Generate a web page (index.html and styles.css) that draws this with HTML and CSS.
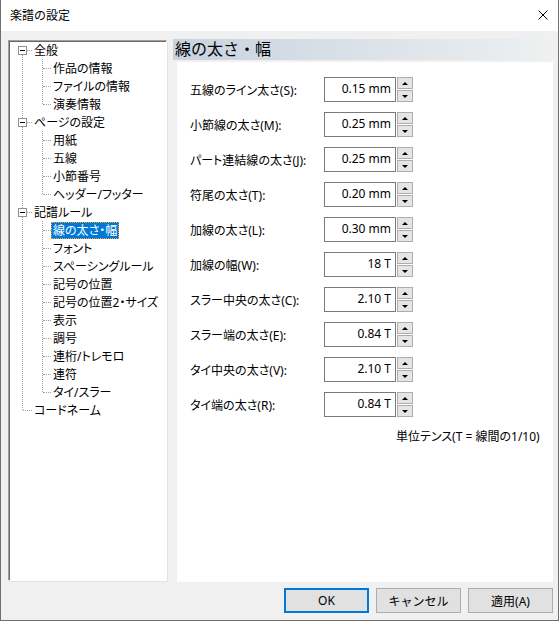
FILE: index.html
```
<!doctype html>
<html lang="ja">
<head>
<meta charset="UTF-8">
<title>楽譜の設定</title>
<link rel="stylesheet" href="styles.css">
</head>
<body>
<div class="window">
	<div class="titlebar">
		<span class="title">楽譜の設定</span>
		<svg class="close" width="10" height="10" viewBox="0 0 10 10"><path d="M0.5 0.5L9.5 9.5M9.5 0.5L0.5 9.5" stroke="#000" stroke-width="1" fill="none"/></svg>
	</div>
	<div class="client">
		<div class="main">
			<div class="treebox">
				<ul class="tree">
					<li class="node">
						<div class="row"><span class="tg"></span><span class="lbl">全般</span></div>
						<ul class="sub">
							<li class="row"><span class="lbl">作品の情報</span></li>
							<li class="row"><span class="lbl">ファイルの情報</span></li>
							<li class="row"><span class="lbl">演奏情報</span></li>
						</ul>
					</li>
					<li class="node">
						<div class="row"><span class="tg"></span><span class="lbl">ページの設定</span></div>
						<ul class="sub">
							<li class="row"><span class="lbl">用紙</span></li>
							<li class="row"><span class="lbl">五線</span></li>
							<li class="row"><span class="lbl">小節番号</span></li>
							<li class="row"><span class="lbl">ヘッダー/フッター</span></li>
						</ul>
					</li>
					<li class="node">
						<div class="row"><span class="tg"></span><span class="lbl">記譜ルール</span></div>
						<ul class="sub">
							<li class="row"><span class="lbl sel">線の太さ・幅</span></li>
							<li class="row"><span class="lbl">フォント</span></li>
							<li class="row"><span class="lbl">スペーシングルール</span></li>
							<li class="row"><span class="lbl">記号の位置</span></li>
							<li class="row"><span class="lbl">記号の位置2・サイズ</span></li>
							<li class="row"><span class="lbl">表示</span></li>
							<li class="row"><span class="lbl">調号</span></li>
							<li class="row"><span class="lbl">連桁/トレモロ</span></li>
							<li class="row"><span class="lbl">連符</span></li>
							<li class="row"><span class="lbl">タイ/スラー</span></li>
						</ul>
					</li>
					<li class="node">
						<div class="row"><span class="lbl">コードネーム</span></div>
					</li>
				</ul>
			</div>
			<div class="page">
				<div class="pagehead">線の太さ・幅</div>
				<div class="pagebody">
					<div class="field"><label>五線のライン太さ(S):</label><div class="spin"><div class="val">0.15 mm</div><div class="arrows"><span class="up"></span><span class="dn"></span></div></div></div>
					<div class="field"><label>小節線の太さ(M):</label><div class="spin"><div class="val">0.25 mm</div><div class="arrows"><span class="up"></span><span class="dn"></span></div></div></div>
					<div class="field"><label>パート連結線の太さ(J):</label><div class="spin"><div class="val">0.25 mm</div><div class="arrows"><span class="up"></span><span class="dn"></span></div></div></div>
					<div class="field"><label>符尾の太さ(T):</label><div class="spin"><div class="val">0.20 mm</div><div class="arrows"><span class="up"></span><span class="dn"></span></div></div></div>
					<div class="field"><label>加線の太さ(L):</label><div class="spin"><div class="val">0.30 mm</div><div class="arrows"><span class="up"></span><span class="dn"></span></div></div></div>
					<div class="field"><label>加線の幅(W):</label><div class="spin"><div class="val">18 T</div><div class="arrows"><span class="up"></span><span class="dn"></span></div></div></div>
					<div class="field"><label>スラー中央の太さ(C):</label><div class="spin"><div class="val">2.10 T</div><div class="arrows"><span class="up"></span><span class="dn"></span></div></div></div>
					<div class="field"><label>スラー端の太さ(E):</label><div class="spin"><div class="val">0.84 T</div><div class="arrows"><span class="up"></span><span class="dn"></span></div></div></div>
					<div class="field"><label>タイ中央の太さ(V):</label><div class="spin"><div class="val">2.10 T</div><div class="arrows"><span class="up"></span><span class="dn"></span></div></div></div>
					<div class="field"><label>タイ端の太さ(R):</label><div class="spin"><div class="val">0.84 T</div><div class="arrows"><span class="up"></span><span class="dn"></span></div></div></div>
					<div class="note">単位テンス(T = 線間の1/10)</div>
				</div>
			</div>
		</div>
		<div class="buttons">
			<button class="btn default">OK</button>
			<button class="btn">キャンセル</button>
			<button class="btn">適用(A)</button>
		</div>
	</div>
</div>
</body>
</html>
```
FILE: styles.css
```
body{
	margin: 0;
	background: #fff;
	font-family: "Noto Sans", "Noto Sans CJK JP", sans-serif;
	font-size: 12px;
	color: #000;
}
ul{
	list-style: none;
	margin: 0;
	padding: 0;
}
.window{
	width: 559px;
	height: 621px;
	box-sizing: border-box;
	border: 1px solid #707070;
	border-top: none;
	display: flex;
	flex-direction: column;
}
.titlebar{
	height: 31px;
	background: #fff;
	display: flex;
	align-items: center;
	justify-content: space-between;
	padding: 0 9px 1px 9px;
	box-sizing: border-box;
}
.close{
	margin-right: 1px;
}
.client{
	flex: 1;
	background: #f0f0f0;
	display: flex;
	flex-direction: column;
}
.main{
	display: flex;
	padding: 9px 0 0 7px;
	height: 542px;
}
/* tree */
.treebox{
	width: 159px;
	height: 541px;
	box-sizing: border-box;
	background: #fff;
	border: 1px solid;
	border-color: #a0a0a0 #fff #fff #a0a0a0;
	box-shadow: inset 1px 1px 0 #696969, 1px 1px 0 #e3e3e3;
}
.tree{
	position: relative;
}
.tree::before{
	content: "";
	position: absolute;
	left: 13px;
	top: 9px;
	bottom: 9px;
	border-left: 1px dotted #a0a0a0;
}
.row{
	height: 18px;
	position: relative;
	display: flex;
	align-items: center;
}
.node > .row::before{
	content: "";
	position: absolute;
	left: 14px;
	width: 9px;
	top: 9px;
	border-top: 1px dotted #a0a0a0;
}
.node > .row .lbl{
	margin-left: 23px;
}
.tg{
	position: absolute;
	left: 9px;
	top: 5px;
	width: 9px;
	height: 9px;
	box-sizing: border-box;
	border: 1px solid #919191;
	background: #fff;
	z-index: 1;
	display: flex;
	align-items: center;
	justify-content: center;
}
.tg::after{
	content: "";
	width: 5px;
	border-top: 1px solid #000;
}
.sub{
	position: relative;
}
.sub::before{
	content: "";
	position: absolute;
	left: 33px;
	top: 0;
	bottom: 9px;
	border-left: 1px dotted #a0a0a0;
}
.sub .row::before{
	content: "";
	position: absolute;
	left: 34px;
	width: 8px;
	top: 9px;
	border-top: 1px dotted #a0a0a0;
}
.sub .lbl{
	margin-left: 42px;
}
.lbl{
	padding: 0 2px;
	line-height: 17px;
	white-space: nowrap;
	font-feature-settings: "palt";
}
.lbl.sel{
	background: #0078d7;
	color: #fff;
	outline: 1px dotted #f5a623;
	outline-offset: -1px;
}
/* right page */
.page{
	margin-left: 6px;
	width: 380px;
	display: flex;
	flex-direction: column;
}
.pagehead{
	height: 21px;
	margin-top: -1px;
	background: linear-gradient(to right, #c7d3df, #eef0f1);
	font-size: 16px;
	line-height: 21px;
	padding-left: 2px;
}
.pagebody{
	flex: 1;
	margin: 2px 0 0 4px;
	background: #fff;
	padding: 15px 0 0 13px;
}
.field{
	display: flex;
	align-items: center;
	height: 25px;
	margin-bottom: 10px;
}
.field label{
	width: 134px;
	font-feature-settings: "palt";
}
.spin{
	display: flex;
	height: 25px;
}
.val{
	width: 72px;
	box-sizing: border-box;
	border: 1px solid #7a7a7a;
	text-align: right;
	padding-right: 4px;
	line-height: 22px;
	background: #fff;
}
.arrows{
	margin-left: 1px;
	width: 16px;
	display: flex;
	flex-direction: column;
	gap: 1px;
}
.arrows span{
	flex: 1;
	box-sizing: border-box;
	border: 1px solid #adadad;
	background: #e5e5e5;
	display: flex;
	align-items: center;
	justify-content: center;
}
.arrows .up::before{
	content: "";
	border-left: 3px solid transparent;
	border-right: 3px solid transparent;
	border-bottom: 3px solid #000;
}
.arrows .dn::before{
	content: "";
	border-left: 3px solid transparent;
	border-right: 3px solid transparent;
	border-top: 3px solid #000;
}
.note{
	margin: 8px 0 0 206px;
	font-feature-settings: "palt";
}
/* buttons */
.buttons{
	display: flex;
	justify-content: flex-end;
	gap: 7px;
	padding: 6px 5px 0 0;
}
.btn{
	width: 85px;
	height: 25px;
	box-sizing: border-box;
	border: 1px solid #adadad;
	background: #e1e1e1;
	font-family: inherit;
	font-size: 12px;
	color: #000;
	padding: 0;
}
.btn.default{
	border: 2px solid #0078d7;
}
```
